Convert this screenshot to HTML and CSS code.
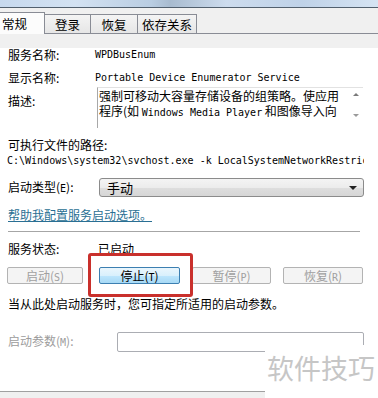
FILE: index.html
```html
<!DOCTYPE html>
<html lang="zh-cn">
<head>
    <meta charset="UTF-8">
    <title>WPDBusEnum 属性</title>
    <link rel="stylesheet" href="styles.css">
</head>
<body>
    <div class="window">
        <div class="titlebar"></div>
        <!-- 选项卡 -->
        <div class="tabs">
            <div class="tab active">常规</div>
            <div class="tab">登录</div>
            <div class="tab">恢复</div>
            <div class="tab last">依存关系</div>
        </div>
        <!-- 常规页 -->
        <div class="page">
            <div class="row first">
                <span class="label">服务名称:</span>
                <span class="mono">WPDBusEnum</span>
            </div>
            <div class="row gap9">
                <span class="label">显示名称:</span>
                <span class="mono">Portable Device Enumerator Service</span>
            </div>
            <div class="row desc-row">
                <span class="label desc-label">描述:</span>
                <div class="desc">
                    <div class="desc-text">强制可移动大容量存储设备的组策略。使应用<br>程序(如 <span class="mono">Windows Media Player</span> 和图像导入向</div>
                    <div class="scroll">
                        <span class="arrow up"></span>
                        <span class="arrow down"></span>
                    </div>
                </div>
            </div>
            <div class="row gap10">可执行文件的路径:</div>
            <div class="row gap2 path"><span class="mono">C:\Windows\system32\svchost.exe -k LocalSystemNetworkRestricted</span></div>
            <div class="row select-row">
                <span class="label type-label">启动类型(<span class="mono">E</span>):</span>
                <div class="select">
                    <span>手动</span>
                    <span class="caret"></span>
                </div>
            </div>
            <div class="row link-row"><a class="link" href="#">帮助我配置服务启动选项。</a></div>
            <div class="sep"></div>
            <div class="row status-row">
                <span class="label status-label">服务状态:</span>
                <span>已启动</span>
            </div>
            <div class="buttons">
                <button class="btn b-start" disabled>启动(<span class="mono">S</span>)</button>
                <button class="btn b-stop">停止(<span class="mono">T</span>)</button>
                <button class="btn b-pause" disabled>暂停(<span class="mono">P</span>)</button>
                <button class="btn b-resume" disabled>恢复(<span class="mono">R</span>)</button>
            </div>
            <div class="row hint">当从此处启动服务时，您可指定所适用的启动参数。</div>
            <div class="row param-row">
                <span class="label param-label">启动参数(<span class="mono">M</span>):</span>
                <div class="input"></div>
            </div>
        </div>
        <!-- 底部按钮 -->
        <div class="footer">
            <button class="dlg-btn ok">确定</button>
            <button class="dlg-btn">取消</button>
        </div>

        <!-- 标注 -->
        <div class="highlight"></div>
        <div class="mark">软件技巧</div>
    </div>
</body>
</html>
```

FILE: styles.css
```css
* {
    padding: 0;
    margin: 0;
    box-sizing: border-box;
}

body {
    background-color: #fff;
    font-family: "Noto Sans CJK SC", "Liberation Sans", sans-serif;
    font-size: 12px;
    color: #000;
}

.window {
    position: relative;
    width: 378px;
    height: 398px;
    overflow: hidden;
    background-color: #f0f0f0;
}

.titlebar {
    height: 8px;
    background: linear-gradient(to right, #c7d9ee 0%, #d3e2f2 20%, #b9cde2 40%, #a8bbcf 45%, #cddcee 60%, #bfd2e8 80%, #d6e4f3 100%);
    border-bottom: 1px solid #52606e;
}

/* 选项卡 */
.tabs {
    height: 26px;
    display: flex;
    align-items: flex-end;
    border-bottom: 1px solid #898c95;
}

.tab {
    height: 19px;
    line-height: 19px;
    text-align: center;
    border: 1px solid #898c95;
    border-bottom: 0;
    border-left: 0;
    background: linear-gradient(#f4f4f4, #e6e6e6);
    font-size: 12.5px;
}

.tab:nth-child(1) {
    width: 45px;
}

.tab:nth-child(2) {
    width: 46px;
}

.tab:nth-child(3) {
    width: 47px;
}

.tab:nth-child(4) {
    width: 59px;
}

.tab.active {
    height: 22px;
    line-height: 22px;
    margin-bottom: -1px;
    background: #fcfcfc;
    text-align: left;
    padding-left: 2px;
}

/* 页面 */
.page {
    height: 343px;
    background-color: #fff;
    padding: 0 14px 0 8px;
}

.row {
    display: flex;
    align-items: center;
    height: 14px;
    line-height: 14px;
    white-space: nowrap;
}

.first {
    margin-top: 14px;
}

.gap9 {
    margin-top: 9px;
}

.gap10 {
    margin-top: 10px;
}

.gap2 {
    margin-top: 2px;
}

.label {
    width: 87px;
    flex-shrink: 0;
}

.mono {
    font-family: "DejaVu Sans Mono", "Liberation Mono", monospace;
    font-size: 10px;
}

.desc-row {
    height: 41px;
    margin-top: 2px;
    align-items: flex-start;
}

.desc-label {
    width: 89px;
    padding-top: 7px;
}

.desc {
    width: 266px;
    height: 41px;
    display: flex;
    border-left: 1px solid #a8a8a8;
    border-top: 1px solid #e2e2e2;
}

.desc-text {
    flex: 1;
    padding-left: 1px;
    line-height: 15px;
    overflow: hidden;
}

.scroll {
    width: 14px;
    display: flex;
    flex-direction: column;
    align-items: center;
    justify-content: space-between;
    padding: 5px 0 11px;
}

.arrow {
    width: 0;
    height: 0;
    border-left: 3px solid transparent;
    border-right: 3px solid transparent;
}

.arrow.up {
    border-bottom: 3px solid #7a7a7a;
}

.arrow.down {
    border-top: 3px solid #9a9a9a;
}

.path {
    width: 357px;
    margin-left: -1px;
    overflow: hidden;
}

.select-row {
    height: 19px;
    margin-top: 10px;
}

.type-label {
    width: 91px;
}

.select {
    width: 265px;
    height: 19px;
    display: flex;
    align-items: center;
    justify-content: space-between;
    padding: 0 6px 0 7px;
    border: 1px solid #8b8b8b;
    border-radius: 3px;
    background: linear-gradient(#f4f4f4 0%, #ececec 50%, #dedede 51%, #d6d6d6 100%);
    font-size: 13px;
}

.caret {
    width: 0;
    height: 0;
    border-left: 4px solid transparent;
    border-right: 4px solid transparent;
    border-top: 4px solid #222;
}

.link-row {
    margin-top: 11px;
}

.link {
    color: #2a6f93;
    text-decoration: underline;
}

.sep {
    width: 352px;
    height: 1px;
    margin-top: 9px;
    background-color: #a6a6a6;
}

.status-row {
    margin-top: 10px;
}

.status-label {
    width: 90px;
}

/* 按钮 */
.buttons {
    display: flex;
    margin-top: 11px;
    margin-left: -1px;
}

.btn {
    height: 17px;
    font-family: "Noto Sans CJK SC", "Liberation Sans", sans-serif;
    font-size: 12px;
    line-height: 15px;
    color: #a0a0a0;
    border: 1px solid #b3b3b3;
    border-radius: 2px;
    background-color: #f4f4f4;
}

.b-start {
    width: 76px;
}

.b-stop {
    width: 81px;
    margin-left: 16px;
    color: #000;
    border-color: #3c7fb1;
    background: linear-gradient(#eaf6fd 0%, #d9f0fc 50%, #bee6fd 51%, #a7d9f5 100%);
}

.b-pause {
    width: 79px;
    margin-left: 12px;
}

.b-resume {
    width: 80px;
    margin-left: 12px;
}

.hint {
    margin-top: 13px;
}

.param-row {
    height: 20px;
    margin-top: 21px;
    color: #9c9c9c;
}

.param-label {
    width: 109px;
}

.input {
    width: 247px;
    height: 20px;
    border: 1px solid #abadb3;
    border-radius: 2px;
    background-color: #fff;
}

/* 底部 */
.footer {
    display: flex;
    padding: 8px 0 0 150px;
    border-top: 1px solid #a0a0a0;
}

.dlg-btn {
    width: 71px;
    height: 23px;
    margin-right: 10px;
    font-family: "Noto Sans CJK SC", "Liberation Sans", sans-serif;
    font-size: 13px;
    border: 1px solid #707070;
    border-radius: 3px;
    background: linear-gradient(#f2f2f2 0%, #ebebeb 50%, #dddddd 51%, #cfcfcf 100%);
}

/* 红框标注 */
.highlight {
    position: absolute;
    left: 88px;
    top: 253px;
    width: 105px;
    height: 44px;
    border: 3px solid #c9302c;
    border-radius: 3px;
}

/* 水印 */
.mark {
    position: absolute;
    left: 265px;
    top: 345px;
    width: 113px;
    height: 53px;
    padding: 7px 0 0 2px;
    background-color: #fff;
    font-size: 27px;
    line-height: 32px;
    color: #c6c6c6;
    white-space: nowrap;
}
```
